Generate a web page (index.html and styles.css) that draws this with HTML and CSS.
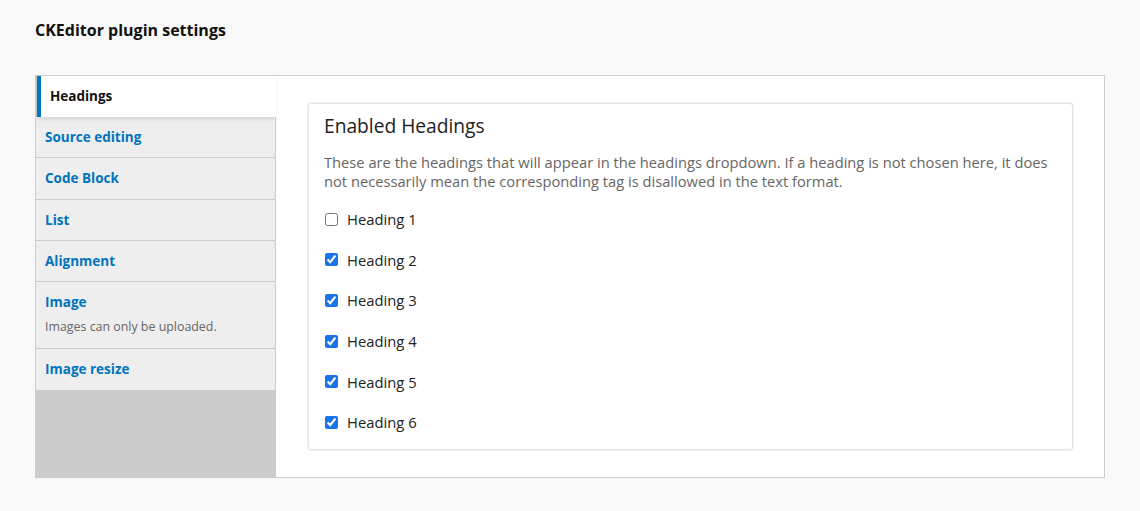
FILE: index.html
```html
<!DOCTYPE html>
<html lang="en">
<head>
<meta charset="utf-8">
<title>CKEditor plugin settings</title>
<link rel="stylesheet" href="styles.css">
</head>
<body>
<div class="page">
  <h2 class="page-title">CKEditor plugin settings</h2>
  <div class="vtabs">
    <ul class="vtabs-menu">
      <li class="vtab is-selected"><a href="#">Headings</a></li>
      <li class="vtab"><a href="#">Source editing</a></li>
      <li class="vtab"><a href="#">Code Block</a></li>
      <li class="vtab"><a href="#">List</a></li>
      <li class="vtab"><a href="#">Alignment</a></li>
      <li class="vtab"><a href="#">Image</a><span class="vtab-summary">Images can only be uploaded.</span></li>
      <li class="vtab"><a href="#">Image resize</a></li>
    </ul>
    <div class="vtabs-pane">
      <div class="details">
        <div class="details-title">Enabled Headings</div>
        <p class="details-desc">These are the headings that will appear in the headings dropdown. If a heading is not chosen here, it does not necessarily mean the corresponding tag is disallowed in the text format.</p>
        <div class="checks">
          <label class="check"><input type="checkbox"><span>Heading 1</span></label>
          <label class="check"><input type="checkbox" checked><span>Heading 2</span></label>
          <label class="check"><input type="checkbox" checked><span>Heading 3</span></label>
          <label class="check"><input type="checkbox" checked><span>Heading 4</span></label>
          <label class="check"><input type="checkbox" checked><span>Heading 5</span></label>
          <label class="check"><input type="checkbox" checked><span>Heading 6</span></label>
        </div>
      </div>
    </div>
  </div>
</div>
</body>
</html>
```
FILE: styles.css
```css
* { box-sizing: border-box; }
html, body {
  margin: 0;
  padding: 0;
  background: #f8f8f8;
  font-family: "Open Sans", "Noto Sans", "Liberation Sans", sans-serif;
  color: #222;
}
.page {
  padding: 20px 35px 0 35px;
}
.page-title {
  margin: 0;
  font-size: 16px;
  line-height: 21px;
  font-weight: 700;
  color: #111;
}
.vtabs {
  margin-top: 34px;
  display: flex;
  border: 1px solid #ccc;
  background: #fff;
  height: 403px;
}
.vtabs-menu {
  list-style: none;
  margin: 0;
  padding: 0;
  width: 240px;
  flex: none;
  background: #ccc;
  border-right: 1px solid #ccc;
}
.vtab {
  background: #eee;
  border-bottom: 1px solid #ccc;
  padding: 11px 10px 10.3px 9px;
}
.vtab a {
  display: block;
  font-size: 13.5px;
  line-height: 19px;
  font-weight: 700;
  color: #0074bd;
  text-decoration: none;
}
.vtab-summary {
  display: block;
  margin-top: 6px;
  margin-bottom: 3px;
  font-size: 12.4px;
  line-height: 17px;
  color: #666;
}
.vtab.is-selected {
  position: relative;
  background: #fff;
  border-left: 4px solid #0074bd;
  border-bottom: 0;
  margin-left: 1px;
  margin-right: -1px;
  padding: 11px 10px 10px 9px;
  height: 41px;
  box-shadow: 0 3px 4px -1px rgba(0, 0, 0, 0.12);
}
.vtab.is-selected a {
  color: #111;
}
.vtabs-pane {
  flex: 1;
  padding: 27px 31px 26px 32px;
}
.details {
  border: 1px solid #e3e3e3;
  border-radius: 3px;
  box-shadow: 0 0 0 1px #f0f0f0;
  padding: 10px 12px 6px 15px;
  height: 347px;
}
.details-title {
  font-size: 19.2px;
  line-height: 24px;
  color: #222;
}
.details-desc {
  margin: 15px 0 8px 0;
  font-size: 14.7px;
  line-height: 19px;
  color: #666;
}
.checks {
  display: flex;
  flex-direction: column;
}
.check {
  display: flex;
  align-items: center;
  height: 40.6px;
  font-size: 14.8px;
  color: #222;
}
.check input {
  width: 13px;
  height: 13px;
  margin: 0 9px 0 1px;
  accent-color: #1a73e8;
}
```
